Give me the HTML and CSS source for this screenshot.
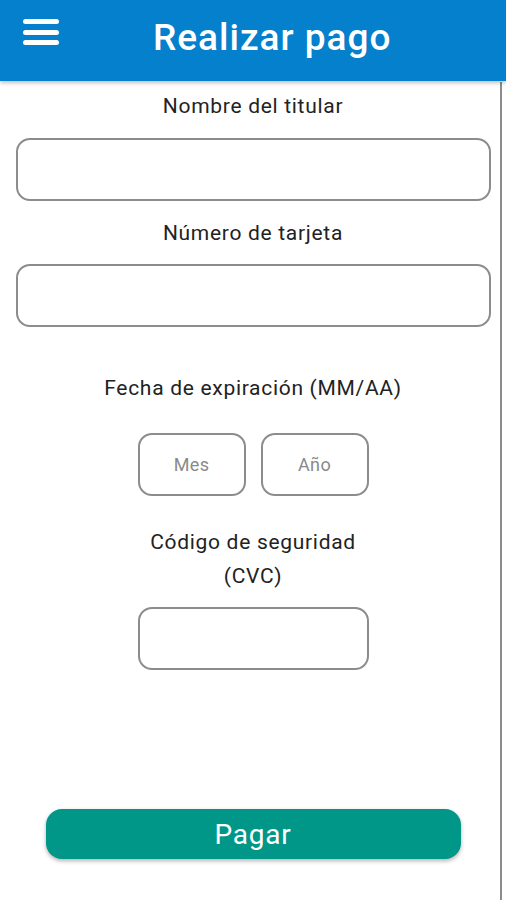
FILE: index.html
```html
<!DOCTYPE html>
<html lang="es">
<head>
<meta charset="utf-8">
<title>Realizar pago</title>
<link rel="stylesheet" href="styles.css">
</head>
<body>
<div class="app">
  <header class="topbar">
    <button class="menu" aria-label="Menú">
      <svg width="36" height="27" viewBox="0 0 36 27">
        <rect x="0" y="0" width="36" height="5" rx="2.5" fill="#fff"/>
        <rect x="0" y="11" width="36" height="5" rx="2.5" fill="#fff"/>
        <rect x="0" y="21" width="36" height="5" rx="2.5" fill="#fff"/>
      </svg>
    </button>
    <h1 class="title">Realizar pago</h1>
  </header>
  <main class="form">
    <label class="label l1">Nombre del titular</label>
    <div class="field wide"></div>
    <label class="label l2">Número de tarjeta</label>
    <div class="field wide"></div>
    <label class="label l3">Fecha de expiración (MM/AA)</label>
    <div class="date-row">
      <div class="field small"><span class="ph">Mes</span></div>
      <div class="field small"><span class="ph">Año</span></div>
    </div>
    <label class="label l4">Código de seguridad<br>(CVC)</label>
    <div class="field cvc"></div>
    <button class="pay">Pagar</button>
  </main>
  <div class="scrollline"></div>
</div>
</body>
</html>
```
FILE: styles.css
```css
* { box-sizing: border-box; }
html, body { margin: 0; padding: 0; background: #fff; }
body { font-family: Roboto, "Noto Sans", Arial, sans-serif; color: #222; }
.app { position: relative; width: 506px; height: 900px; overflow: hidden; }
.topbar {
  height: 81px;
  background: #0480cc;
  display: flex;
  align-items: center;
  padding-left: 23px;
  box-shadow: 0 2px 4px rgba(0,0,0,0.25);
  position: relative;
  z-index: 1;
}
.menu { border: 0; background: none; padding: 0; margin: 0; width: 36px; height: 27px; display: block; margin-top: -16px; }
.menu svg { display: block; }
.title {
  margin: 0 0 0 94px;
  font-size: 37px;
  font-weight: 500;
  color: #fff;
  letter-spacing: 1px;
  line-height: 1;
  margin-top: -6px;
}
.form { display: flex; flex-direction: column; align-items: center; }
.label { font-size: 21px; letter-spacing: 0.7px; line-height: 24px; text-align: center; color: #222; display: block; }
.l1 { margin-top: 13px; }
.l2 { margin-top: 20px; }
.l3 { margin-top: 49px; }
.l4 { margin-top: 29px; line-height: 34px; }
.field {
  border: 2px solid #8c8c8c;
  border-radius: 14px;
  height: 63px;
  background: #fff;
}
.wide { width: 475px; margin-top: 20px; }
.l2 + .wide { margin-top: 19px; }
.date-row { display: flex; gap: 15px; margin-top: 33px; }
.small { width: 108px; display: flex; align-items: center; justify-content: center; }
.ph { color: #8a8a8a; font-size: 18px; letter-spacing: 0.4px; }
.cvc { width: 231px; margin-top: 14px; }
.pay {
  margin-top: 139px;
  width: 415px;
  height: 50px;
  border: 0;
  border-radius: 16px;
  background: #009688;
  color: #fff;
  font-family: Roboto, "Noto Sans", Arial, sans-serif;
  font-size: 28px;
  letter-spacing: 0.8px;
  box-shadow: 0 2px 4px rgba(0,0,0,0.3);
  padding: 0;
}
.scrollline {
  position: absolute;
  left: 500px;
  top: 82px;
  width: 2px;
  bottom: 0;
  background: #8c8c8c;
}
```
